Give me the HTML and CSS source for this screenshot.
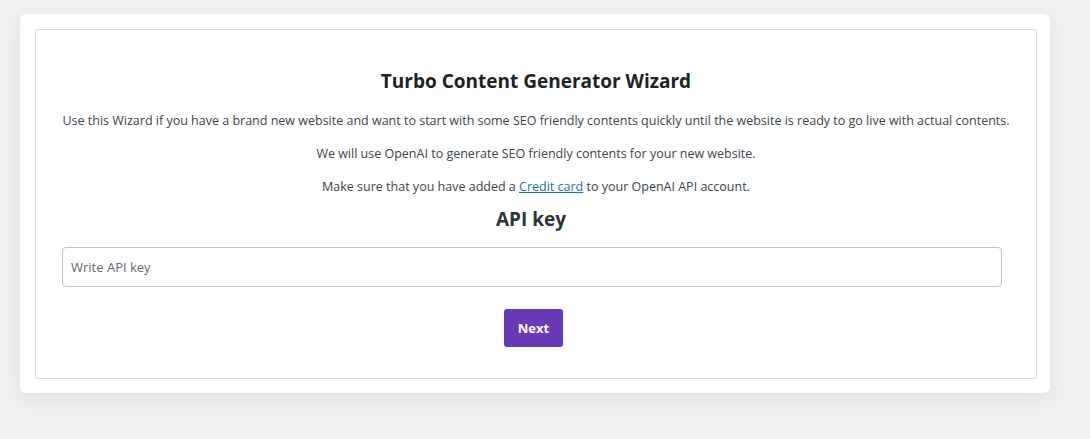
FILE: index.html
```html
<!DOCTYPE html>
<html>
<head>
<meta charset="utf-8">
<link rel="stylesheet" href="styles.css">
</head>
<body>
<div class="page">
  <div class="card">
    <div class="panel">
      <h1 class="title">Turbo Content Generator Wizard</h1>
      <p class="text">Use this Wizard if you have a brand new website and want to start with some SEO friendly contents quickly until the website is ready to go live with actual contents.</p>
      <p class="text">We will use OpenAI to generate SEO friendly contents for your new website.</p>
      <p class="text">Make sure that you have added a <a class="link" href="#">Credit card</a> to your OpenAI API account.</p>
      <h2 class="subtitle">API key</h2>
      <div class="field-row">
        <input class="field" type="text" placeholder="Write API key">
      </div>
      <div class="actions">
        <button class="btn" type="button">Next</button>
      </div>
    </div>
  </div>
</div>
</body>
</html>
```

FILE: styles.css
```css
html, body {
  margin: 0;
  padding: 0;
  background: #f0f0f1;
  font-family: "Open Sans", "Noto Sans", sans-serif;
  color: #3c434a;
}
.page {
  padding: 14px 40px 0 20px;
  height: 439px;
  box-sizing: border-box;
}
.card {
  background: #fff;
  border-radius: 6px;
  padding: 15px 13px 14px 15px;
  box-shadow: 0 6px 22px rgba(0, 0, 0, 0.06);
}
.panel {
  border: 1px solid #dcdcde;
  border-radius: 3px;
  padding: 38px 26px 31px 26px;
  text-align: center;
}
.title {
  margin: 0 0 17px;
  font-size: 19px;
  line-height: 26px;
  font-weight: 700;
  color: #1d2327;
}
.text {
  margin: 0 0 13px;
  font-size: 12.5px;
  line-height: 20px;
}
.link {
  color: #2271b1;
  text-decoration: underline;
}
.subtitle {
  margin: -4px 0 15px;
  padding-right: 10px;
  font-size: 19px;
  line-height: 26px;
  font-weight: 700;
  color: #2c3338;
}
.field-row {
  display: flex;
}
.field {
  width: 940px;
  height: 40px;
  box-sizing: border-box;
  border: 1px solid #c3c4c7;
  border-radius: 4px;
  padding: 0 8px;
  font-family: inherit;
  font-size: 13px;
  color: #3c434a;
}
.field::placeholder {
  color: #646970;
}
.actions {
  margin-top: 22px;
  padding-right: 5px;
  display: flex;
  justify-content: center;
}
.btn {
  width: 59px;
  height: 38px;
  border: none;
  border-radius: 3px;
  background: #673ab7;
  color: #fff;
  font-family: inherit;
  font-size: 13px;
  font-weight: 700;
}
```
